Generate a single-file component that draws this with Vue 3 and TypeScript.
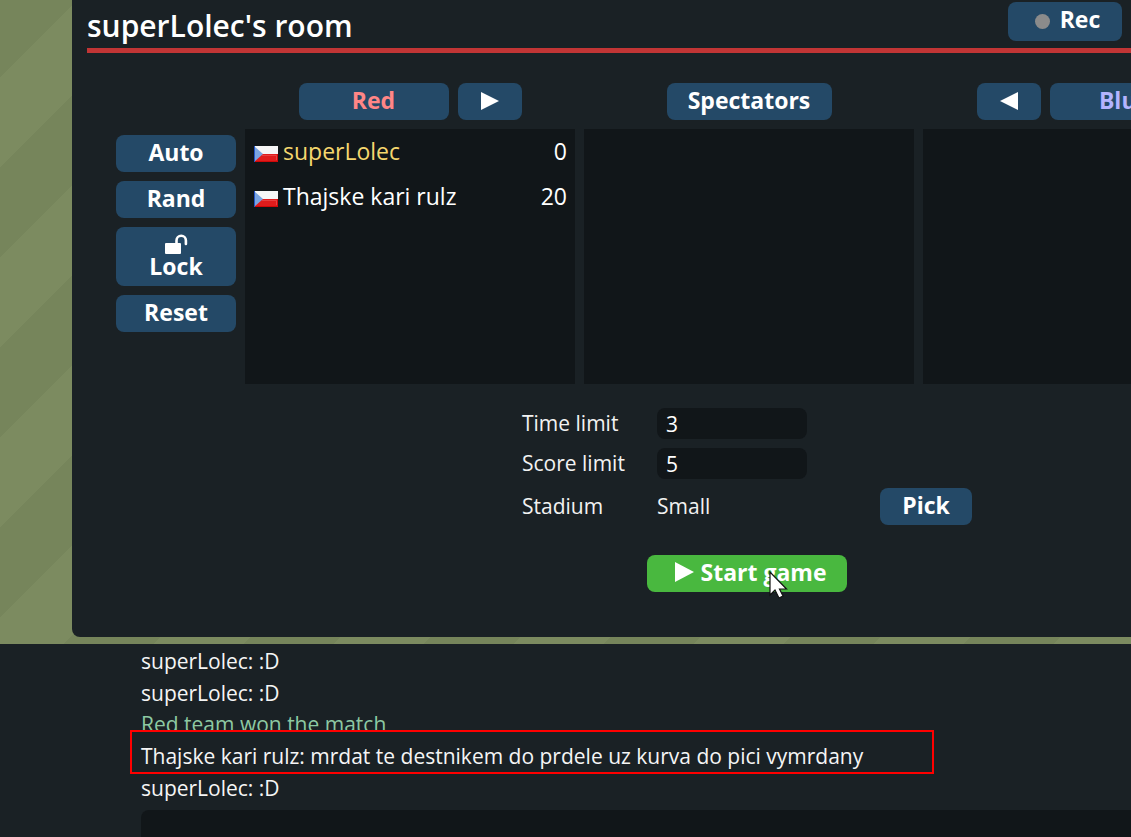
<script setup lang="ts">
import { ref } from 'vue'

interface Player {
  name: string
  ping: number
  self?: boolean
}

interface ChatLine {
  text: string
  notice?: boolean
}

const redTeam = ref<Player[]>([
  { name: 'superLolec', ping: 0, self: true },
  { name: 'Thajske kari rulz', ping: 20 },
])

const chatLines = ref<ChatLine[]>([
  { text: 'superLolec: :D' },
  { text: 'superLolec: :D' },
  { text: 'Red team won the match', notice: true },
  { text: 'Thajske kari rulz: mrdat te destnikem do prdele uz kurva do pici vymrdany' },
  { text: 'superLolec: :D' },
])

const limits = Array.from({ length: 15 }, (_, i) => i)
const timeLimit = ref(3)
const scoreLimit = ref(5)
const message = ref('')
</script>

<template>
  <div class="page">
    <main class="room">
      <header class="room-header">
        <h1>superLolec's room</h1>
        <button type="button" class="btn rec"><span class="dot"></span>Rec</button>
      </header>

      <div class="teams">
        <div class="tools">
          <button type="button" class="btn">Auto</button>
          <button type="button" class="btn">Rand</button>
          <button type="button" class="btn lock">
            <svg width="24" height="20" viewBox="0 0 24 20" aria-hidden="true">
              <rect x="1" y="9" width="16" height="11" rx="1" fill="#fff" />
              <path d="M12.500 10V6.500a4.700 4.700 0 0 1 9.400 0V10" fill="none" stroke="#fff" stroke-width="2.600" stroke-linecap="round" />
            </svg>
            Lock
          </button>
          <button type="button" class="btn">Reset</button>
        </div>

        <section class="team">
          <div class="team-head">
            <button type="button" class="btn wide red">Red</button>
            <button type="button" class="btn arrow" aria-label="Move to red">
              <svg width="18" height="18" viewBox="0 0 18 18" aria-hidden="true"><path d="M0 0L18 9L0 18Z" fill="#fff" /></svg>
            </button>
          </div>
          <ul class="players">
            <li v-for="player in redTeam" :key="player.name" class="player">
              <svg class="flag" width="24" height="16" viewBox="0 0 24 16" aria-hidden="true">
                <rect width="24" height="8" fill="#f6f6f6" />
                <rect y="8" width="24" height="8" fill="#e01c1c" />
                <path d="M1 15.500H23.500V8" fill="none" stroke="#d00808" />
                <path d="M8 9.500H22.500V14" fill="none" stroke="#e84040" />
                <path d="M0 0L9 8L0 16Z" fill="#7aa5e2" />
                <path d="M.5 0V16" stroke="#2455c8" />
              </svg>
              <span class="name" :class="{ self: player.self }">{{ player.name }}</span>
              <span>{{ player.ping }}</span>
            </li>
          </ul>
        </section>

        <section class="team">
          <div class="team-head">
            <button type="button" class="btn spectators">Spectators</button>
          </div>
          <ul class="players"></ul>
        </section>

        <section class="team">
          <div class="team-head">
            <button type="button" class="btn arrow" aria-label="Move to blue">
              <svg width="18" height="18" viewBox="0 0 18 18" aria-hidden="true"><path d="M18 0L0 9L18 18Z" fill="#fff" /></svg>
            </button>
            <button type="button" class="btn wide blue">Blue</button>
          </div>
          <ul class="players"></ul>
        </section>
      </div>

      <div class="setup">
        <div class="settings">
          <label for="time-limit">Time limit</label>
          <select id="time-limit" v-model="timeLimit">
            <option v-for="n in limits" :key="n" :value="n">{{ n }}</option>
          </select>
          <label for="score-limit">Score limit</label>
          <select id="score-limit" v-model="scoreLimit">
            <option v-for="n in limits" :key="n" :value="n">{{ n }}</option>
          </select>
          <span>Stadium</span>
          <span>Small</span>
          <button type="button" class="btn pick">Pick</button>
        </div>

        <button type="button" class="btn start">
          <svg width="19" height="20" viewBox="0 0 19 20" aria-hidden="true"><path d="M0 0L19 10L0 20Z" fill="#fff" /></svg>
          Start game
          <svg class="cursor" width="20" height="30" viewBox="0 0 20 30" aria-hidden="true">
            <path d="M1 1V24L6 19L10 27L14 25L10.500 18H17.500Z" fill="#fff" stroke="#111" stroke-width="1.200" />
          </svg>
        </button>
      </div>
    </main>

    <section class="chat">
      <div class="log">
        <p v-for="(line, i) in chatLines" :key="i" :class="{ notice: line.notice }">{{ line.text }}</p>
        <div class="highlight"></div>
      </div>
      <input v-model="message" class="message" type="text" aria-label="Message" />
    </section>
  </div>
</template>

<style>
body {
  margin: 0;
}
</style>

<style scoped>
.page {
  display: flex;
  flex-direction: column;
  height: 100vh;
  overflow: hidden;
  color: #fff;
  font-family: "Open Sans", "Noto Sans", sans-serif;
  font-size: 21px;
  background-color: #7b8a5f;
  background-image: linear-gradient(135deg, #7c8b60 25%, #76855b 25%, #76855b 50%, #7c8b60 50%, #7c8b60 75%, #76855b 75%);
  background-size: 180px 180px;
  background-position: 78px 0;
}

.room {
  display: flex;
  flex-direction: column;
  flex: none;
  box-sizing: border-box;
  min-width: 1354px;
  margin: 0 0 7px 72px;
  padding: 0 15px 45px;
  background: #1a2125;
  border-radius: 0 0 8px 8px;
}

.room-header {
  display: flex;
  align-items: flex-start;
  justify-content: space-between;
  height: 48px;
  padding-right: 289px;
  border-bottom: 5px solid #c13535;
}

h1 {
  margin: 0;
  font-size: 30px;
  line-height: 52px;
  font-weight: 600;
}

.btn {
  display: flex;
  align-items: center;
  justify-content: center;
  box-sizing: border-box;
  height: 37px;
  padding: 0 0 3px;
  border: 0;
  border-radius: 8px;
  background: #244967;
  color: #fff;
  font-family: inherit;
  font-size: 23px;
  line-height: 24px;
  font-weight: 700;
}

.rec {
  gap: 10px;
  width: 114px;
  height: 39px;
  margin-top: 2px;
  padding: 0 0 5px 5px;
}

.dot {
  width: 15px;
  height: 15px;
  margin-top: 5px;
  border-radius: 50%;
  background: #8b8b8b;
}

.teams {
  display: flex;
  gap: 9px;
  margin-top: 30px;
  padding-left: 29px;
}

.tools {
  display: flex;
  flex-direction: column;
  gap: 9px;
  width: 120px;
  margin-top: 52px;
}

.lock {
  flex-direction: column;
  height: 59px;
  padding-bottom: 2px;
}

.team {
  width: 330px;
}

.team-head {
  display: flex;
  justify-content: center;
  gap: 9px;
}

.wide {
  width: 150px;
}

.arrow {
  width: 64px;
  padding-bottom: 1px;
}

.spectators {
  width: 165px;
}

.red {
  color: #ff8686;
}

.blue {
  color: #b4b4ff;
}

.players {
  box-sizing: border-box;
  height: 255px;
  margin: 9px 0 0;
  padding: 0 8px 0 9px;
  background: #111619;
  list-style: none;
}

.player {
  display: flex;
  align-items: center;
  height: 45px;
  font-size: 23px;
  line-height: 31px;
}

.flag {
  margin: 4px 5px 0 0;
}

.name {
  flex: 1;
}

.self {
  color: #f5d76e;
}

.setup {
  display: flex;
  flex-direction: column;
  margin-top: 24px;
  padding-right: 4px;
}

.settings {
  display: grid;
  grid-template-columns: 135px 223px 92px;
  grid-template-rows: 31px 31px 37px;
  row-gap: 9px;
  align-items: center;
  justify-content: center;
  line-height: 28px;
  color: #f2f2f2;
}

.settings label,
.settings span {
  padding-bottom: 2px;
}

.settings select {
  grid-column: 2 / 4;
  width: 150px;
  height: 31px;
  padding: 0 9px;
  border: 0;
  border-radius: 8px;
  appearance: none;
  background: #111619;
  color: #fff;
  font-family: inherit;
  font-size: 21px;
}

.start {
  position: relative;
  align-self: center;
  gap: 6px;
  width: 200px;
  margin-top: 30px;
  padding-left: 8px;
  background: #49b83f;
}

.cursor {
  position: absolute;
  left: 122px;
  top: 16px;
}

.chat {
  display: flex;
  flex-direction: column;
  flex: 1;
  padding: 2px 0 0 141px;
  background: #1a2125;
}

.log {
  position: relative;
  display: grid;
  grid-auto-rows: 1fr;
  align-items: center;
  height: 158px;
  color: #f5f5f5;
}

.log p {
  margin: 0;
  line-height: 31px;
}

.log .notice {
  color: #8dc9a3;
}

.highlight {
  position: absolute;
  left: -11px;
  top: 84px;
  width: 800px;
  height: 40px;
  border: 2px solid #f00;
}

.message {
  box-sizing: border-box;
  height: 42px;
  margin-top: 6px;
  padding: 0 9px;
  border: 0;
  border-radius: 8px 0 0 8px;
  background: #111619;
  color: #fff;
  font-family: inherit;
  font-size: 21px;
}
</style>
